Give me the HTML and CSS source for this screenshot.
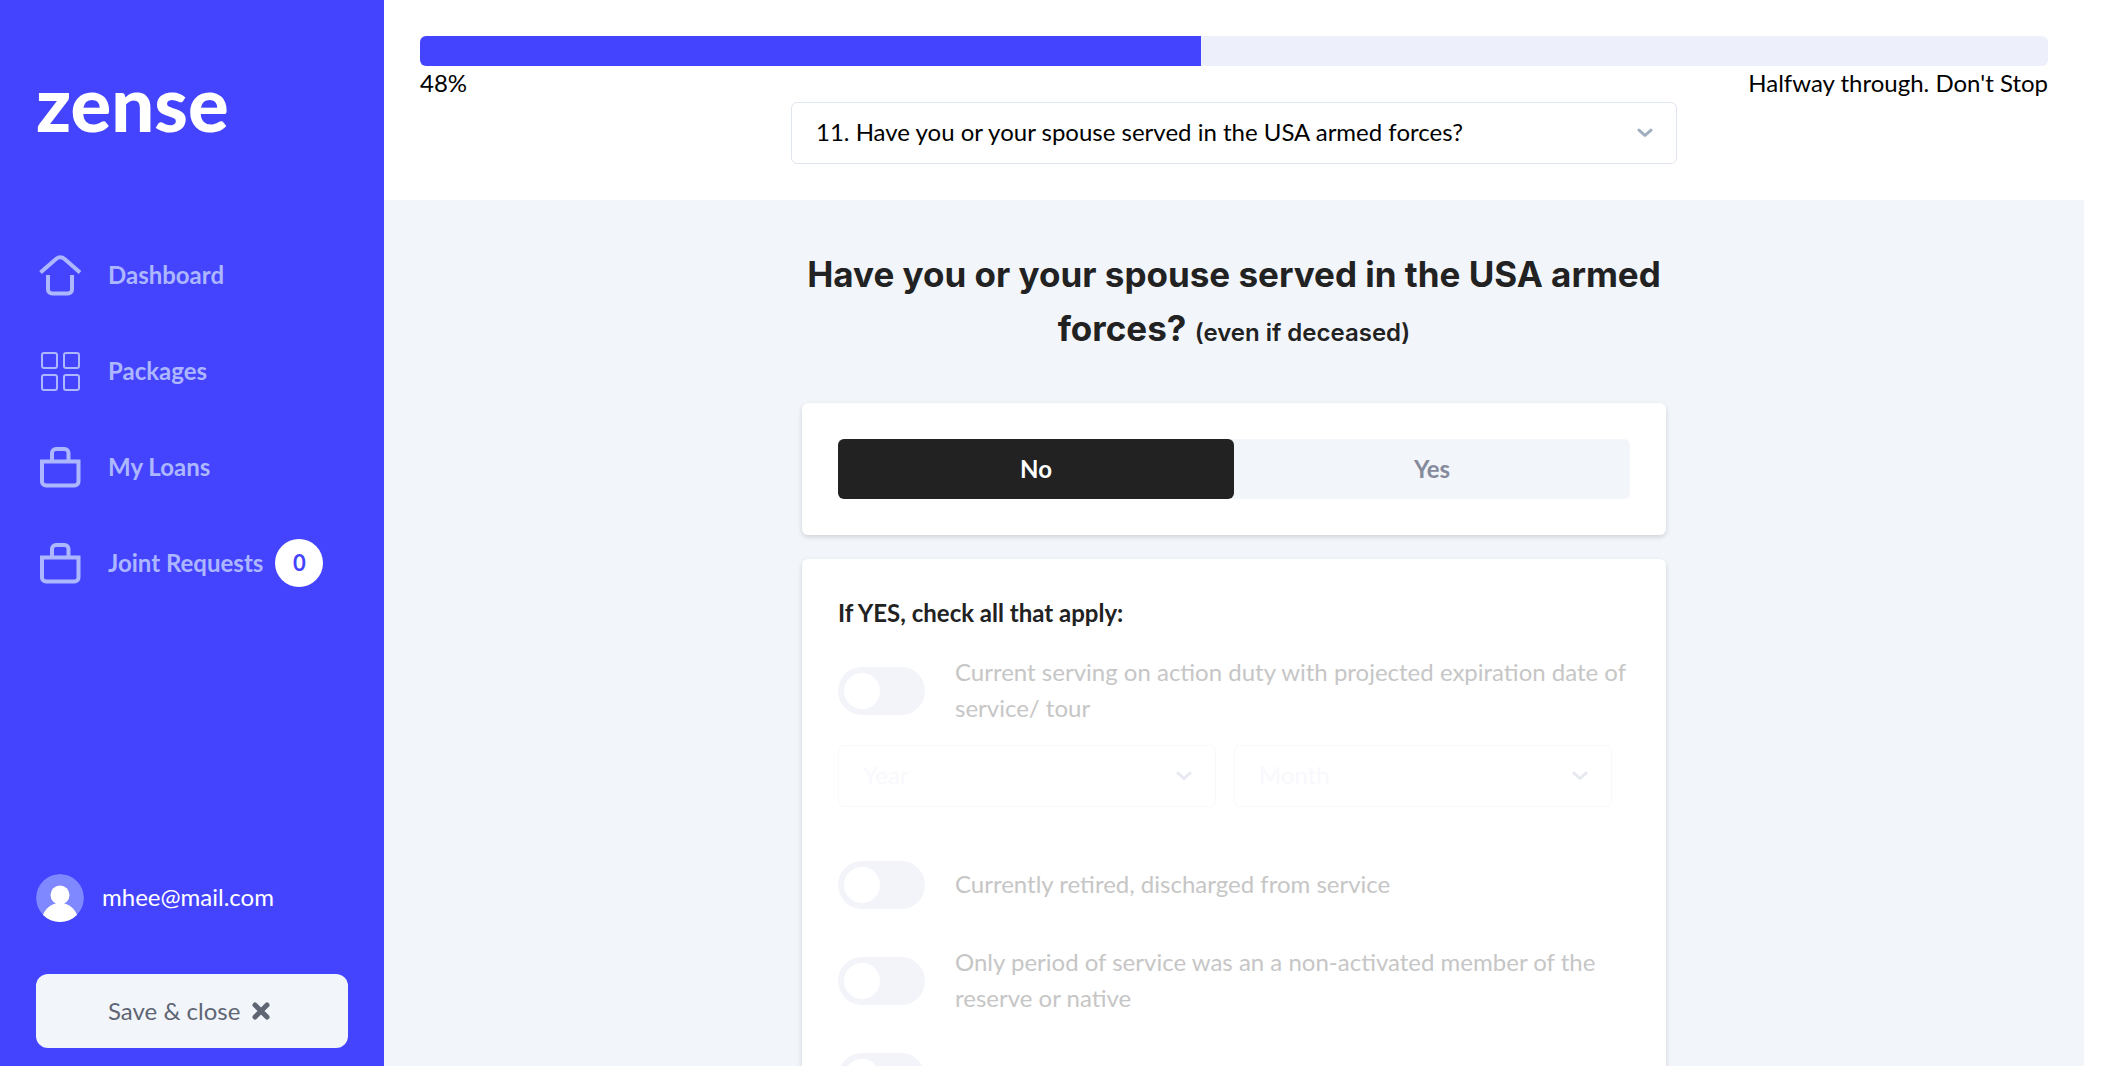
FILE: index.html
```html
<!DOCTYPE html>
<html lang="en">
<head>
<meta charset="utf-8">
<meta name="viewport" content="width=device-width, initial-scale=1">
<title>zense – Military service</title>
<link rel="stylesheet" href="styles.css">
</head>
<body>
<svg class="sprite" aria-hidden="true">
  <symbol id="icon-bag" viewBox="0 0 48 48"><path d="M6 18.500h36.500v20a4 4 0 0 1-4 4h-28.500a4 4 0 0 1-4-4z M16 18v-8a4 4 0 0 1 4-4h8.500a4 4 0 0 1 4 4v8" fill="none" stroke="currentColor" stroke-width="4"/></symbol>
  <symbol id="icon-chevron" viewBox="0 0 16 10"><path d="M2 2.200 8 7.500l6-5.300" fill="none" stroke="currentColor" stroke-width="3" stroke-linecap="round" stroke-linejoin="round"/></symbol>
</svg>
<div class="layout">
  <aside class="sidebar">
    <a class="logo" href="#">zense</a>
    <nav class="nav">
      <a class="nav-link" href="#">
        <svg class="nav-icon" viewBox="0 0 48 48" aria-hidden="true"><path d="M4.500 21.500 20 8Q24.300 4.500 28.600 8L44 21.500M12 24v14.500a4 4 0 0 0 4 4h16a4 4 0 0 0 4-4V24" fill="none" stroke="currentColor" stroke-width="4"/></svg>
        <span>Dashboard</span>
      </a>
      <a class="nav-link" href="#">
        <svg class="nav-icon" viewBox="0 0 48 48" aria-hidden="true"><g fill="none" stroke="currentColor" stroke-width="2"><rect x="6" y="6" width="15" height="15" rx="2"/><rect x="28" y="6" width="15" height="15" rx="2"/><rect x="6" y="28" width="15" height="15" rx="2"/><rect x="28" y="28" width="15" height="15" rx="2"/></g></svg>
        <span>Packages</span>
      </a>
      <a class="nav-link" href="#">
        <svg class="nav-icon" aria-hidden="true"><use href="#icon-bag"/></svg>
        <span>My Loans</span>
      </a>
      <a class="nav-link" href="#">
        <svg class="nav-icon" aria-hidden="true"><use href="#icon-bag"/></svg>
        <span>Joint Requests</span>
        <span class="badge">0</span>
      </a>
    </nav>
    <div class="account">
      <div class="user">
        <svg class="avatar" viewBox="0 0 48 48" aria-hidden="true"><defs><clipPath id="avatar-clip"><circle cx="24" cy="24" r="24"/></clipPath></defs><g clip-path="url(#avatar-clip)"><circle cx="24" cy="24" r="24" fill="#7f88ff"/><circle cx="24" cy="21" r="9.500" fill="#fff"/><circle cx="24" cy="47" r="18" fill="#fff"/></g></svg>
        <span>mhee@mail.com</span>
      </div>
      <button class="save" type="button">
        <span>Save &amp; close</span>
        <svg class="save-icon" viewBox="0 0 18 18" aria-hidden="true"><path d="M3 3l12 12M15 3 3 15" stroke="currentColor" stroke-width="5" stroke-linecap="round"/></svg>
      </button>
    </div>
  </aside>
  <main class="main">
    <header class="progress-header">
      <div class="progress" role="progressbar" aria-label="Progress" aria-valuenow="48" aria-valuemin="0" aria-valuemax="100">
        <div class="progress-fill" style="width: 48%"></div>
      </div>
      <div class="progress-text"><span>48%</span><span>Halfway through. Don't Stop</span></div>
      <div class="select-box question-select">
        <select class="select" aria-label="Question">
          <option>11. Have you or your spouse served in the USA armed forces?</option>
        </select>
        <svg class="chevron" aria-hidden="true"><use href="#icon-chevron"/></svg>
      </div>
    </header>
    <form class="form">
      <h1 class="title">Have you or your spouse served in the USA armed forces? <small class="title-note">(even if deceased)</small></h1>
      <section class="card">
        <div class="segments" role="radiogroup" aria-label="Served in the USA armed forces">
          <input class="segment-input" type="radio" name="served" id="served-no" checked>
          <label class="segment" for="served-no">No</label>
          <input class="segment-input" type="radio" name="served" id="served-yes">
          <label class="segment" for="served-yes">Yes</label>
        </div>
      </section>
      <section class="card">
        <h2 class="subtitle">If YES, check all that apply:</h2>
        <div class="options">
          <div class="option">
            <input class="switch" type="checkbox" id="opt-active" disabled>
            <label for="opt-active">Current serving on action duty with projected expiration date of service/ tour</label>
          </div>
          <div class="date-row">
            <div class="select-box">
              <select class="select" aria-label="Year" disabled><option>Year</option></select>
              <svg class="chevron" aria-hidden="true"><use href="#icon-chevron"/></svg>
            </div>
            <div class="select-box">
              <select class="select" aria-label="Month" disabled><option>Month</option></select>
              <svg class="chevron" aria-hidden="true"><use href="#icon-chevron"/></svg>
            </div>
          </div>
          <div class="option">
            <input class="switch" type="checkbox" id="opt-retired" disabled>
            <label for="opt-retired">Currently retired, discharged from service</label>
          </div>
          <div class="option">
            <input class="switch" type="checkbox" id="opt-reserve" disabled>
            <label for="opt-reserve">Only period of service was an a non-activated member of the reserve or native</label>
          </div>
          <div class="option">
            <input class="switch" type="checkbox" aria-label="Surviving spouse" disabled>
          </div>
        </div>
      </section>
    </form>
  </main>
</div>
</body>
</html>
```
FILE: styles.css
```css
* { box-sizing: border-box; }

body {
  margin: 0;
  background: #fff;
  color: #000;
  font: 24px/36px Lato, "Open Sans", sans-serif;
}

.sprite { position: absolute; width: 0; height: 0; }

.layout {
  display: grid;
  grid-template-columns: 384px minmax(0, 1fr);
  height: 100vh;
  padding-right: 28px;
}

.sidebar {
  display: flex;
  flex-direction: column;
  padding: 67px 36px 18px;
  background: #4444ff;
  color: #fff;
}

.logo {
  color: #fff;
  font-size: 76px;
  font-weight: 900;
  line-height: 72px;
  text-decoration: none;
}

.nav { margin-top: 88px; }

.nav-link {
  display: flex;
  align-items: center;
  height: 96px;
  color: #adb7ff;
  font-weight: 700;
  text-decoration: none;
  white-space: nowrap;
}

.nav-icon { width: 48px; height: 48px; margin-right: 24px; }

.badge {
  width: 48px;
  margin-left: 12px;
  border-radius: 50%;
  background: #fff;
  color: #4444ff;
  font-size: 22px;
  line-height: 48px;
  text-align: center;
}

.account { margin-top: auto; }
.user { display: flex; align-items: center; gap: 18px; margin-bottom: 52px; }
.user span { padding-bottom: 2px; }
.avatar { width: 48px; height: 48px; }

.save {
  display: flex;
  align-items: center;
  gap: 12px;
  width: 100%;
  height: 74px;
  padding: 0 72px;
  border: 0;
  border-radius: 12px;
  background: #f2f6fb;
  color: #5f6573;
  font: inherit;
  white-space: nowrap;
}

.save-icon { width: 18px; height: 18px; }

.main { overflow-y: auto; scrollbar-width: none; background: #f2f6fb; }

.progress-header { padding: 36px; background: #fff; }

.progress {
  height: 30px;
  overflow: hidden;
  border-radius: 6px;
  background: #edf0fa;
}

.progress-fill { height: 100%; background: #4444ff; }

.progress-text {
  display: flex;
  justify-content: space-between;
  padding-bottom: 2px;
  line-height: 34px;
}

.select-box { position: relative; }
.question-select { max-width: 886px; margin: 0 auto; }

.select {
  display: block;
  width: 100%;
  height: 62px;
  padding: 0 60px 2px 24px;
  appearance: none;
  border: 1px solid #e0e6ed;
  border-radius: 6px;
  background: #fff;
  color: #000;
  font: inherit;
}

.select:disabled { border-color: #f9f9fb; color: #f8f8fd; opacity: 1; }

.chevron {
  position: absolute;
  top: 26px;
  right: 24px;
  width: 16px;
  height: 10px;
  color: #a0aec0;
  pointer-events: none;
}

.select:disabled + .chevron { color: #e6e9f0; }

.form { max-width: 864px; margin: 0 auto; padding: 47px 0; }

.title {
  margin: 0 0 48px;
  color: #222;
  font: 700 35px/54px Inter, sans-serif;
  text-align: center;
}

.title-note { font-size: 24px; font-weight: 600; line-height: 24px; }

.card {
  margin-bottom: 24px;
  padding: 36px;
  border-radius: 6px;
  background: #fff;
  box-shadow: 0 2px 5px rgba(0, 0, 0, 0.15);
}

.segments {
  display: grid;
  grid-template-columns: 1fr 1fr;
  border-radius: 6px;
  background: #f2f6fb;
}

.segment-input { position: absolute; opacity: 0; }

.segment {
  border-radius: 6px;
  color: #868b9c;
  font-weight: 700;
  line-height: 60px;
  text-align: center;
}

.segment-input:checked + .segment { background: #222; color: #fff; }

.subtitle { margin: 0 0 24px; color: #222; font-size: 24px; font-weight: 700; }

.options { display: grid; gap: 24px; }

.option {
  display: grid;
  grid-template-columns: 87px minmax(0, 1fr);
  gap: 30px;
  align-items: center;
  min-height: 72px;
  color: #c6c6c6;
}

.option label { margin-top: -2px; }

.switch {
  display: flex;
  align-items: center;
  width: 87px;
  height: 48px;
  margin: 0;
  padding: 6px;
  appearance: none;
  border-radius: 24px;
  background: #f2f4f9;
}

.switch::before {
  content: "";
  width: 36px;
  height: 36px;
  border-radius: 50%;
  background: #fff;
}

.date-row {
  display: grid;
  grid-template-columns: 1fr 1fr;
  gap: 18px;
  margin: -6px 18px 18px 0;
}
```
